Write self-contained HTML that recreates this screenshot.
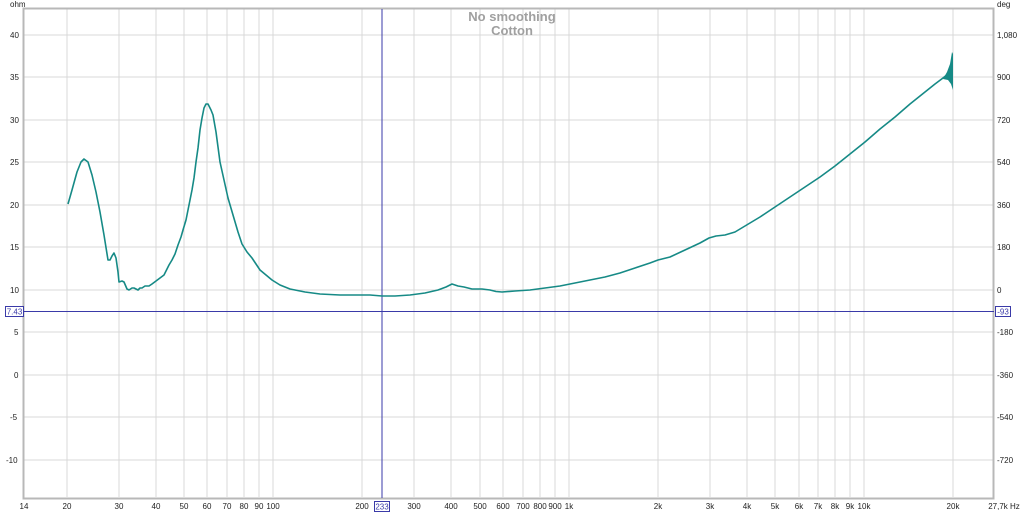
<!DOCTYPE html>
<html><head><meta charset="utf-8"><style>
html,body{margin:0;padding:0;background:#fff;}
svg{display:block;font-family:"Liberation Sans",sans-serif;}
</style></head><body>
<svg width="1024" height="512" viewBox="0 0 1024 512" xmlns="http://www.w3.org/2000/svg">
<rect width="1024" height="512" fill="#fff"/>
<g stroke="#d8d8d8" stroke-width="1">
<line x1="67" y1="9" x2="67" y2="497"/><line x1="119" y1="9" x2="119" y2="497"/><line x1="156" y1="9" x2="156" y2="497"/><line x1="184" y1="9" x2="184" y2="497"/><line x1="207" y1="9" x2="207" y2="497"/><line x1="227" y1="9" x2="227" y2="497"/><line x1="244" y1="9" x2="244" y2="497"/><line x1="259" y1="9" x2="259" y2="497"/><line x1="273" y1="9" x2="273" y2="497"/>
<line x1="362" y1="9" x2="362" y2="497"/><line x1="414" y1="9" x2="414" y2="497"/><line x1="451" y1="9" x2="451" y2="497"/><line x1="480" y1="9" x2="480" y2="497"/><line x1="503" y1="9" x2="503" y2="497"/><line x1="523" y1="9" x2="523" y2="497"/><line x1="540" y1="9" x2="540" y2="497"/><line x1="555" y1="9" x2="555" y2="497"/><line x1="569" y1="9" x2="569" y2="497"/>
<line x1="658" y1="9" x2="658" y2="497"/><line x1="710" y1="9" x2="710" y2="497"/><line x1="747" y1="9" x2="747" y2="497"/><line x1="775" y1="9" x2="775" y2="497"/><line x1="799" y1="9" x2="799" y2="497"/><line x1="818" y1="9" x2="818" y2="497"/><line x1="835" y1="9" x2="835" y2="497"/><line x1="850" y1="9" x2="850" y2="497"/><line x1="864" y1="9" x2="864" y2="497"/><line x1="953" y1="9" x2="953" y2="497"/>
<line x1="24" y1="35" x2="993" y2="35"/><line x1="24" y1="77" x2="993" y2="77"/><line x1="24" y1="120" x2="993" y2="120"/><line x1="24" y1="162" x2="993" y2="162"/><line x1="24" y1="205" x2="993" y2="205"/><line x1="24" y1="247" x2="993" y2="247"/><line x1="24" y1="290" x2="993" y2="290"/><line x1="24" y1="332" x2="993" y2="332"/><line x1="24" y1="375" x2="993" y2="375"/><line x1="24" y1="417" x2="993" y2="417"/><line x1="24" y1="460" x2="993" y2="460"/>
</g>
<rect x="23.5" y="8.5" width="970" height="490" fill="none" stroke="#b8b8b8" stroke-width="2"/>
<line x1="382" y1="9" x2="382" y2="498" stroke="#3a3aa8" stroke-width="1"/>
<line x1="24" y1="311.5" x2="994" y2="311.5" stroke="#3a3aa8" stroke-width="1"/>
<text x="512" y="21" font-size="13" font-weight="bold" fill="#a0a0a0" text-anchor="middle">No smoothing</text>
<text x="512" y="35" font-size="13" font-weight="bold" fill="#a0a0a0" text-anchor="middle">Cotton</text>
<polyline fill="none" stroke="#168a86" stroke-width="1.6" stroke-linejoin="round" points="68,204 72,190 77,172 81,162 84,159 88,162 92,175 96,192 100,212 104,235 108,260 110,260 112,256 114,253 116,258 118,272 119,282 122,281 124,282 127,289 129,290 132,288 134,288 136,289 138,290 140,288 142,288 145,286 149,286 152,284 156,281 160,278 164,275 166,271 169,265 172,260 175,254 178,245 181,237 183,230 186,220 188,210 192,190 194,178 196,162 198,148 200,130 202,118 204,108 206,104 208,104 211,110 213,115 216,132 218,147 220,162 224,180 228,198 233,215 238,232 242,244 247,252 252,258 256,264 260,270 266,275 272,280 280,285 290,289 305,292 320,294 340,295 360,295 370,295 382,296 395,296 410,295 425,293 438,290 446,287 452,284 458,286 464,287 472,289 482,289 490,290 496,291.5 502,292 515,291 530,290 545,288 560,286 575,283 590,280 605,277 620,273 635,268 650,263 658,260 670,257 685,250 700,243 709,238 716,236 725,235 735,232 745,226 760,217 775,207 790,197 805,187 820,177 835,166 850,154 865,142 880,129 895,117 910,104 925,92 935,84 943,78 948,74"/>
<path d="M943,79 L947,72 L950,64 L952,52 L953,54 L953,90 L951,84 L948,80 Z" fill="#168a86"/>
<g font-size="8" fill="#222">
<text x="10" y="7">ohm</text>
<text x="10" y="38">40</text><text x="10" y="80">35</text><text x="10" y="123">30</text><text x="10" y="165">25</text><text x="10" y="208">20</text><text x="10" y="250">15</text><text x="10" y="293">10</text><text x="14" y="335">5</text><text x="14" y="378">0</text><text x="10" y="420">-5</text><text x="6" y="463">-10</text>
<text x="997" y="7">deg</text>
<text x="997" y="38">1,080</text><text x="997" y="80">900</text><text x="997" y="123">720</text><text x="997" y="165">540</text><text x="997" y="208">360</text><text x="997" y="250">180</text><text x="997" y="293">0</text><text x="997" y="335">-180</text><text x="997" y="378">-360</text><text x="997" y="420">-540</text><text x="997" y="463">-720</text>
<g text-anchor="middle">
<text x="24" y="509">14</text><text x="67" y="509">20</text><text x="119" y="509">30</text><text x="156" y="509">40</text><text x="184" y="509">50</text><text x="207" y="509">60</text><text x="227" y="509">70</text><text x="244" y="509">80</text><text x="259" y="509">90</text><text x="273" y="509">100</text>
<text x="362" y="509">200</text><text x="414" y="509">300</text><text x="451" y="509">400</text><text x="480" y="509">500</text><text x="503" y="509">600</text><text x="523" y="509">700</text><text x="540" y="509">800</text><text x="555" y="509">900</text><text x="569" y="509">1k</text>
<text x="658" y="509">2k</text><text x="710" y="509">3k</text><text x="747" y="509">4k</text><text x="775" y="509">5k</text><text x="799" y="509">6k</text><text x="818" y="509">7k</text><text x="835" y="509">8k</text><text x="850" y="509">9k</text><text x="864" y="509">10k</text><text x="953" y="509">20k</text><text x="1004" y="509">27,7k Hz</text>
</g>
</g>
<rect x="374.5" y="501.5" width="15" height="10" fill="#fff" stroke="#3a3aa8"/>
<text x="382" y="509.5" font-size="8" fill="#3a3aa8" text-anchor="middle">233</text>
<rect x="5.5" y="306.5" width="18" height="10" fill="#fff" stroke="#3a3aa8"/>
<text x="14.5" y="314.5" font-size="8" fill="#3a3aa8" text-anchor="middle">7.43</text>
<rect x="995.5" y="306.5" width="15" height="10" fill="#fff" stroke="#3a3aa8"/>
<text x="1003" y="314.5" font-size="8" fill="#3a3aa8" text-anchor="middle">-93</text>
</svg>
</body></html>
